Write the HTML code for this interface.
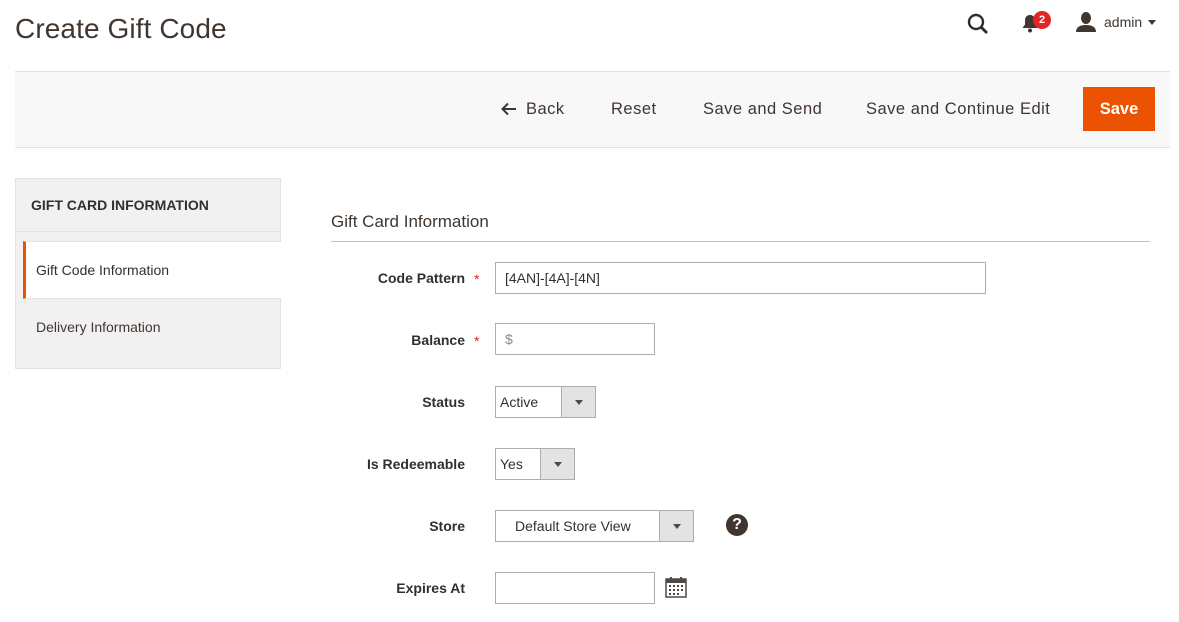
<!DOCTYPE html>
<html><head><meta charset="utf-8"><style>
*{box-sizing:border-box;margin:0;padding:0}
body{width:1179px;height:622px;background:#fff;font-family:"Liberation Sans",sans-serif;color:#41362f;position:relative;overflow:hidden}
.a{position:absolute}
h1{position:absolute;left:15px;top:13px;font-size:28px;font-weight:normal;color:#41362f;letter-spacing:.1px}
.bar{left:15px;top:71px;width:1155px;height:77px;background:#f8f8f8;border-top:1px solid #e3e3e3;border-bottom:1px solid #e3e3e3}
.btn{font-size:16.5px;color:#41362f;top:100px;white-space:nowrap;letter-spacing:.5px}
.save{left:1083px;top:87px;width:72px;height:44px;background:#eb5202;color:#fff;font-weight:bold;font-size:16.5px;text-align:center;line-height:44px}
.lab{font-size:14px;font-weight:bold;color:#303030;right:714px;text-align:right;white-space:nowrap}
.star{color:#e22626;font-size:14px;left:474px}
.in{border:1px solid #adadad;background:#fff;font-size:14px;color:#303030;padding-left:9px;line-height:30px;height:32px}
.arr{position:absolute;right:0;top:0;width:34px;height:30px;background:#e3e3e3;border-left:1px solid #adadad}
.arr:after{content:"";position:absolute;left:13px;top:13px;border:4px solid transparent;border-top:5px solid #514943;border-bottom:0}
</style></head><body>
<h1>Create Gift Code</h1>
<svg class="a" style="left:966px;top:12px" width="24" height="24" viewBox="0 0 24 24"><circle cx="10" cy="10" r="7" fill="none" stroke="#2f2a26" stroke-width="2.4"/><path d="M15 15l6 6" stroke="#2f2a26" stroke-width="2.8"/></svg>
<svg class="a" style="left:1021px;top:14px" width="18" height="20" viewBox="0 0 18 20"><path d="M9 1c-3.5 0-5 2.5-5 5.5v4L1.5 14h15L14 10.5v-4C14 3.5 12.5 1 9 1z" fill="#41362f"/><circle cx="9" cy="16.5" r="2" fill="#41362f"/></svg>
<div class="a" style="left:1033px;top:11px;width:18px;height:18px;border-radius:9px;background:#e22626;color:#fff;font-size:11px;font-weight:bold;text-align:center;line-height:18px">2</div>
<svg class="a" style="left:1075px;top:12px" width="22" height="20" viewBox="0 0 22 20"><ellipse cx="11" cy="6" rx="5" ry="6" fill="#41362f"/><path d="M1 20c0-5 4-7 10-7s10 2 10 7z" fill="#41362f"/></svg>
<div class="a" style="left:1104px;top:14px;font-size:14px;color:#41362f">admin</div>
<div class="a" style="left:1148px;top:20px;border:4px solid transparent;border-top:5px solid #41362f"></div>

<div class="a bar"></div>
<svg class="a" style="left:501px;top:102px" width="16" height="14" viewBox="0 0 16 14"><path d="M15 7H2M7 1.5L1.5 7 7 12.5" fill="none" stroke="#41362f" stroke-width="2"/></svg>
<div class="a btn" style="left:526px">Back</div>
<div class="a btn" style="left:611px">Reset</div>
<div class="a btn" style="left:703px">Save and Send</div>
<div class="a btn" style="left:866px">Save and Continue Edit</div>
<div class="a save">Save</div>

<div class="a" style="left:15px;top:178px;width:266px;height:191px;background:#f1f1f1;border:1px solid #e3e3e3"></div>
<div class="a" style="left:15px;top:231px;width:266px;height:1px;background:#e3e3e3"></div>
<div class="a" style="left:31px;top:197px;font-size:14px;font-weight:bold;color:#303030">GIFT CARD INFORMATION</div>
<div class="a" style="left:23px;top:241px;width:258px;height:58px;background:#fff;border-left:3px solid #eb5202;border-bottom:1px solid #e3e3e3;border-top:1px solid #e3e3e3"></div>
<div class="a" style="left:36px;top:262px;font-size:14px;color:#303030">Gift Code Information</div>
<div class="a" style="left:36px;top:319px;font-size:14px;color:#41362f">Delivery Information</div>

<div class="a" style="left:331px;top:212px;font-size:17px;color:#41362f">Gift Card Information</div>
<div class="a" style="left:331px;top:241px;width:819px;height:1px;background:#cac3b4"></div>

<div class="a lab" style="top:270px">Code Pattern</div><div class="a star" style="top:271px">*</div>
<div class="a in" style="left:495px;top:262px;width:491px">[4AN]-[4A]-[4N]</div>
<div class="a lab" style="top:332px">Balance</div><div class="a star" style="top:333px">*</div>
<div class="a in" style="left:495px;top:323px;width:160px;color:#8a8a8a">$</div>
<div class="a lab" style="top:394px">Status</div>
<div class="a in" style="left:495px;top:386px;width:101px;padding-left:4px">Active<span class="arr"></span></div>
<div class="a lab" style="top:456px">Is Redeemable</div>
<div class="a in" style="left:495px;top:448px;width:80px;padding-left:4px">Yes<span class="arr"></span></div>
<div class="a lab" style="top:518px">Store</div>
<div class="a in" style="left:495px;top:510px;width:199px;padding-left:19px">Default Store View<span class="arr"></span></div>
<div class="a" style="left:726px;top:514px;width:22px;height:22px;border-radius:11px;background:#41362f;color:#fff;font-weight:bold;font-size:16px;text-align:center;line-height:22px">?</div>
<div class="a lab" style="top:580px">Expires At</div>
<div class="a in" style="left:495px;top:572px;width:160px"></div>
<svg class="a" style="left:665px;top:576px" width="22" height="22" viewBox="0 0 22 22"><rect x="1" y="3" width="20" height="18" fill="#fff" stroke="#514943" stroke-width="1.5"/><rect x="1" y="3" width="20" height="4" fill="#514943"/><path d="M6 1v4M16 1v4" stroke="#514943" stroke-width="2"/><g fill="#514943"><rect x="4" y="9" width="2" height="2"/><rect x="8" y="9" width="2" height="2"/><rect x="12" y="9" width="2" height="2"/><rect x="16" y="9" width="2" height="2"/><rect x="4" y="13" width="2" height="2"/><rect x="8" y="13" width="2" height="2"/><rect x="12" y="13" width="2" height="2"/><rect x="16" y="13" width="2" height="2"/><rect x="4" y="17" width="2" height="2"/><rect x="8" y="17" width="2" height="2"/><rect x="12" y="17" width="2" height="2"/></g></svg>
</body></html>
